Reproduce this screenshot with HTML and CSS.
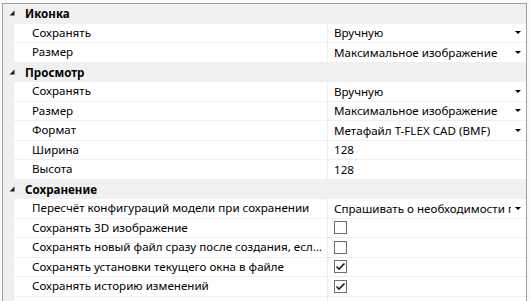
FILE: index.html
```html
<!DOCTYPE html>
<html lang="ru">
<head>
    <meta charset="UTF-8">
    <title>Свойства</title>
    <link rel="stylesheet" href="styles.css">
</head>
<body>
    <div class="grid">
        <!-- Иконка -->
        <div class="group">
            <span class="expander"><svg width="6" height="6" viewBox="0 0 6 6"><polygon points="5.5,0.5 5.5,5.5 0.5,5.5" fill="#1e1e1e"/></svg></span>
            <span class="group-title">Иконка</span>
        </div>
        <div class="row">
            <span class="gutter"></span>
            <span class="name">Сохранять</span>
            <span class="value combo">Вручную<i class="arrow"></i></span>
        </div>
        <div class="row">
            <span class="gutter"></span>
            <span class="name">Размер</span>
            <span class="value combo">Максимальное изображение<i class="arrow"></i></span>
        </div>

        <!-- Просмотр -->
        <div class="group">
            <span class="expander"><svg width="6" height="6" viewBox="0 0 6 6"><polygon points="5.5,0.5 5.5,5.5 0.5,5.5" fill="#1e1e1e"/></svg></span>
            <span class="group-title">Просмотр</span>
        </div>
        <div class="row">
            <span class="gutter"></span>
            <span class="name">Сохранять</span>
            <span class="value combo">Вручную<i class="arrow"></i></span>
        </div>
        <div class="row">
            <span class="gutter"></span>
            <span class="name">Размер</span>
            <span class="value combo">Максимальное изображение<i class="arrow"></i></span>
        </div>
        <div class="row">
            <span class="gutter"></span>
            <span class="name">Формат</span>
            <span class="value combo">Метафайл T-FLEX CAD (BMF)<i class="arrow"></i></span>
        </div>
        <div class="row">
            <span class="gutter"></span>
            <span class="name">Ширина</span>
            <span class="value">128</span>
        </div>
        <div class="row">
            <span class="gutter"></span>
            <span class="name">Высота</span>
            <span class="value">128</span>
        </div>

        <!-- Сохранение -->
        <div class="group">
            <span class="expander"><svg width="6" height="6" viewBox="0 0 6 6"><polygon points="5.5,0.5 5.5,5.5 0.5,5.5" fill="#1e1e1e"/></svg></span>
            <span class="group-title">Сохранение</span>
        </div>
        <div class="row">
            <span class="gutter"></span>
            <span class="name">Пересчёт конфигураций модели при сохранении</span>
            <span class="value combo"><span class="clip">Спрашивать о необходимости пересчёта</span><i class="arrow"></i></span>
        </div>
        <div class="row">
            <span class="gutter"></span>
            <span class="name">Сохранять 3D изображение</span>
            <span class="value"><span class="check"></span></span>
        </div>
        <div class="row">
            <span class="gutter"></span>
            <span class="name">Сохранять новый файл сразу после создания, если файл не был сохранён</span>
            <span class="value"><span class="check"></span></span>
        </div>
        <div class="row">
            <span class="gutter"></span>
            <span class="name">Сохранять установки текущего окна в файле</span>
            <span class="value"><span class="check checked"><svg width="11" height="11" viewBox="0 0 11 11"><polyline points="1.5,5.5 4,8 9.5,2.5" fill="none" stroke="#1a1a1a" stroke-width="1.6"/></svg></span></span>
        </div>
        <div class="row">
            <span class="gutter"></span>
            <span class="name">Сохранять историю изменений</span>
            <span class="value"><span class="check checked"><svg width="11" height="11" viewBox="0 0 11 11"><polyline points="1.5,5.5 4,8 9.5,2.5" fill="none" stroke="#1a1a1a" stroke-width="1.6"/></svg></span></span>
        </div>
        <div class="row">
            <span class="gutter"></span>
            <span class="name"></span>
            <span class="value"></span>
        </div>
    </div>
</body>
</html>
```

FILE: styles.css
```css
* {
    margin: 0;
    padding: 0;
    box-sizing: border-box;
}

html, body {
    height: 100%;
    overflow: hidden;
}

body {
    font-family: 'Noto Sans', 'Liberation Sans', sans-serif;
    font-size: 11.6px;
    color: #000;
    background: #fafafa;
}

.grid {
    margin: 3px 3px 0 2px;
    height: 298px;
    overflow: hidden;
    border: 1px solid #a0a0a0;
    border-bottom: none;
    background: #f0f0f0;
}

/* заголовок группы */
.group {
    display: flex;
    align-items: center;
    height: 19.5px;
    background: #f0f0f0;
}

.expander {
    width: 22px;
    display: flex;
    justify-content: flex-end;
    padding-right: 10px;
    padding-bottom: 1px;
}

.group-title {
    font-weight: bold;
}

/* строка свойства */
.row {
    display: grid;
    grid-template-columns: 11px 314px 1fr;
    height: 19.5px;
}

.gutter {
    background: #f0f0f0;
}

.name, .value {
    background: #fff;
    border-bottom: 1px solid #f0f0f0;
    display: flex;
    align-items: center;
    white-space: nowrap;
    overflow: hidden;
}

.name {
    padding: 0 2px 0 18px;
    border-right: 1px solid #f0f0f0;
    display: block;
    line-height: 18.5px;
    text-overflow: ellipsis;
}

.value {
    padding: 0 4px 0 6px;
}

.combo {
    justify-content: space-between;
}

.clip {
    overflow: hidden;
    flex: 1;
}

.arrow {
    flex: none;
    width: 0;
    height: 0;
    margin: 0 1px 0 4px;
    border-left: 3px solid transparent;
    border-right: 3px solid transparent;
    border-top: 3px solid #000;
}

.check {
    width: 13px;
    height: 13px;
    border: 1px solid #6d6d6d;
    background: #fff;
    display: flex;
    align-items: center;
    justify-content: center;
}
```
